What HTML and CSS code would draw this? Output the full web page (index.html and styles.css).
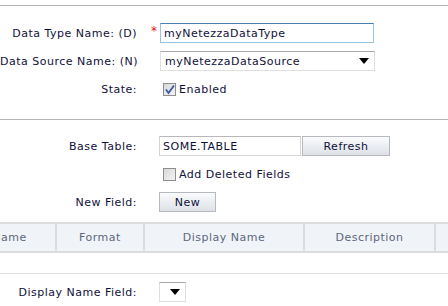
FILE: index.html
```html
<!DOCTYPE html>
<html lang="en">
<head>
  <meta charset="UTF-8">
  <title>Data Type</title>
  <link rel="stylesheet" href="styles.css">
</head>
<body>

  <div class="section general">
    <div class="row">
      <label class="label">Data Type Name: (D)</label>
      <div class="field">
        <span class="required">*</span>
        <input class="text focused" type="text" value="myNetezzaDataType">
      </div>
    </div>
    <div class="row">
      <label class="label">Data Source Name: (N)</label>
      <div class="field">
        <div class="select wide">
          <span>myNetezzaDataSource</span>
          <span class="arrow"></span>
        </div>
      </div>
    </div>
    <div class="row">
      <label class="label">State:</label>
      <div class="field">
        <span class="check">
          <svg width="13" height="13" viewBox="0 0 13 13"><path d="M3 6.5 L5.5 10 L11 2.5" fill="none" stroke="#3b58a6" stroke-width="1.8"/></svg>
        </span>
        <span class="check-text">Enabled</span>
      </div>
    </div>
  </div>

  <div class="section table-setup">
    <div class="row">
      <label class="label">Base Table:</label>
      <div class="field">
        <input class="text base" type="text" value="SOME.TABLE">
        <button class="btn refresh">Refresh</button>
      </div>
    </div>
    <div class="row">
      <label class="label"></label>
      <div class="field">
        <span class="check"></span>
        <span class="check-text">Add Deleted Fields</span>
      </div>
    </div>
    <div class="row">
      <label class="label">New Field:</label>
      <div class="field">
        <button class="btn new">New</button>
      </div>
    </div>
  </div>

  <div class="grid">
    <div class="grid-head">
      <div class="col c-name">Name</div>
      <div class="col c-format">Format</div>
      <div class="col c-display">Display Name</div>
      <div class="col c-desc">Description</div>
      <div class="col c-more"></div>
    </div>
    <div class="grid-empty"></div>
  </div>

  <div class="section footer">
    <div class="row">
      <label class="label">Display Name Field:</label>
      <div class="field">
        <div class="select small">
          <span class="arrow"></span>
        </div>
      </div>
    </div>
  </div>

</body>
</html>
```

FILE: styles.css
```css
body {
  margin: 0;
  font-family: 'DejaVu Sans', Verdana, sans-serif;
  font-size: 11px;
  letter-spacing: 0.5px;
  color: #10103a;
  background: #fff;
  width: 448px;
  height: 306px;
  overflow: hidden;
}

.section.general {
  margin-top: 5px;
  border-top: 1px solid #b4b4b4;
  padding: 13px 0 16px;
}

.section.table-setup {
  border-top: 1px solid #b4b4b4;
  padding: 12px 0 0;
}

.section.footer {
  padding-top: 4px;
}

.row {
  display: flex;
  align-items: center;
  height: 28px;
}

.label {
  width: 137px;
  text-align: right;
  flex-shrink: 0;
  white-space: nowrap;
}

.field {
  display: flex;
  align-items: center;
  margin-left: 22px;
  position: relative;
}

.required {
  position: absolute;
  left: -8px;
  top: 1px;
  color: #e02020;
  font-size: 12px;
}

input.text {
  font-family: inherit;
  font-size: 11px;
  letter-spacing: 0.5px;
  color: #10103a;
  height: 20px;
  box-sizing: border-box;
  padding: 0 3px;
  margin: 0;
  border: 1px solid #d4d4d4;
  border-top-color: #b8b8b8;
  outline: none;
}

input.focused {
  width: 214px;
  margin-left: 1px;
  border-color: #9cc3e0;
  border-top-color: #4a80b0;
}

input.base {
  width: 142px;
}

.select {
  display: flex;
  align-items: center;
  justify-content: space-between;
  height: 20px;
  box-sizing: border-box;
  padding: 0 5px 0 4px;
  border: 1px solid #dedede;
  border-top-color: #a8a8a8;
}

.select.wide {
  width: 215px;
  margin-left: 1px;
}

.select.small {
  width: 27px;
  justify-content: flex-end;
}

.arrow {
  width: 0;
  height: 0;
  border-left: 5px solid transparent;
  border-right: 5px solid transparent;
  border-top: 6px solid #000;
}

.check {
  width: 13px;
  height: 13px;
  box-sizing: border-box;
  margin-left: 4px;
  border: 1px solid #8e8e8e;
  background: linear-gradient(to bottom right, #d8d8d8, #f4f4f4);
  display: flex;
  align-items: center;
  justify-content: center;
}

.check svg {
  margin: -1px;
}

.check-text {
  margin-left: 3px;
}

.btn {
  font-family: inherit;
  font-size: 11px;
  letter-spacing: 0.5px;
  color: #10103a;
  height: 20px;
  margin: 0;
  padding: 0;
  border: 1px solid #b6babe;
  background: linear-gradient(to bottom, #fafbfc, #dde1e6);
  cursor: pointer;
}

.btn.refresh {
  width: 88px;
  margin-left: 1px;
}

.btn.new {
  width: 57px;
}

.grid {
  margin-top: 6px;
}

.grid-head {
  display: flex;
  height: 31px;
  box-sizing: border-box;
  margin-left: -36px;
  background: #f0f4f8;
  border-top: 2px solid #dcdcdc;
  border-bottom: 2px solid #dcdcdc;
}

.col {
  display: flex;
  align-items: center;
  justify-content: center;
  color: #5c677b;
  border-right: 2px solid #dcdcdc;
  flex-shrink: 0;
}

.c-name { width: 91px; }
.c-format { width: 86px; }
.c-display { width: 158px; }
.c-desc { width: 129px; }
.c-more { width: 40px; border-right: none; }

.grid-empty {
  height: 20px;
  border-bottom: 1px solid #e0e0e0;
}
```
